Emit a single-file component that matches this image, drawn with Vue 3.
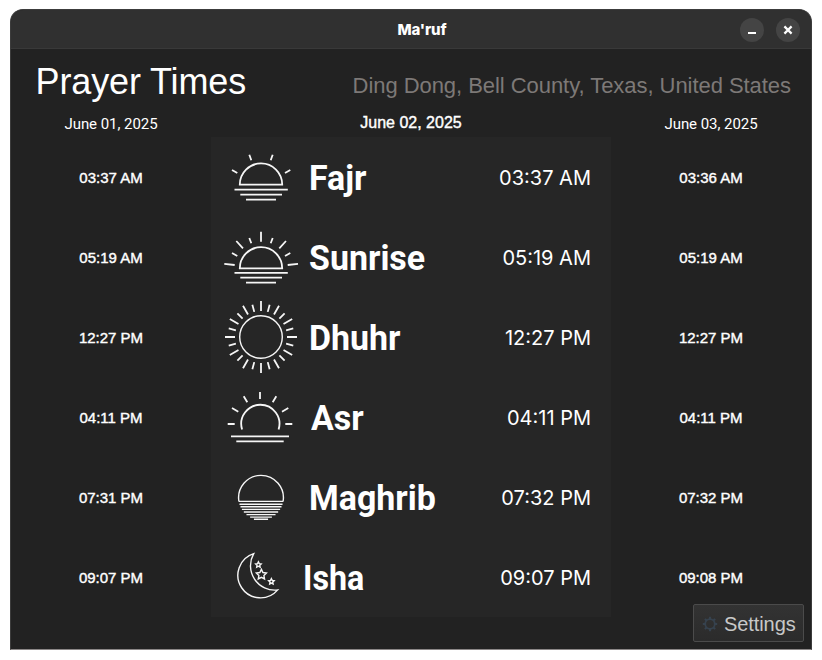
<script setup>
const polar = (cx, cy, r, deg) => {
  const a = (deg * Math.PI) / 180
  return [cx + r * Math.sin(a), cy - r * Math.cos(a)]
}

const noonRays = Array.from({ length: 24 }, (_, i) => {
  const long = i % 2 === 0
  const [x1, y1] = polar(40, 40, 26, i * 15)
  const [x2, y2] = polar(40, 40, long ? 36 : 33.4, i * 15)
  return `M${x1.toFixed(2)} ${y1.toFixed(2)}L${x2.toFixed(2)} ${y2.toFixed(2)}`
}).join('')

const star = (cx, cy, r) =>
  Array.from({ length: 10 }, (_, i) => {
    const [x, y] = polar(cx, cy, i % 2 ? r * 0.5 : r, i * 36)
    return `${x.toFixed(2)},${y.toFixed(2)}`
  }).join(' ')

const waterLines = [44.4, 47.2, 49.8, 52.4, 55, 57.6, 60.1, 62.2].map((y) => {
  const half = Math.sqrt(Math.max(22.6 ** 2 - (y - 40.3) ** 2, 50))
  return `M${(40 - half).toFixed(2)} ${y}H${(40 + half).toFixed(2)}`
}).join('')

const prayers = [
  { id: 'fajr', name: 'Fajr', prev: '03:37 AM', now: '03:37 AM', next: '03:36 AM' },
  { id: 'sunrise', name: 'Sunrise', prev: '05:19 AM', now: '05:19 AM', next: '05:19 AM' },
  { id: 'dhuhr', name: 'Dhuhr', prev: '12:27 PM', now: '12:27 PM', next: '12:27 PM' },
  { id: 'asr', name: 'Asr', prev: '04:11 PM', now: '04:11 PM', next: '04:11 PM' },
  { id: 'maghrib', name: 'Maghrib', prev: '07:31 PM', now: '07:32 PM', next: '07:32 PM' },
  { id: 'isha', name: 'Isha', prev: '09:07 PM', now: '09:07 PM', next: '09:08 PM' },
]
</script>

<template>
  <main class="window">
    <header class="titlebar">
      <span class="app-name">Ma'ruf</span>
      <div class="controls">
        <button class="control" aria-label="Minimize">
          <svg viewBox="0 0 24 24"><path d="M8 15h8" stroke="#fff" stroke-width="2" /></svg>
        </button>
        <button class="control" aria-label="Close">
          <svg viewBox="0 0 24 24"><path d="M8.4 8.4l7.2 7.2M15.6 8.4l-7.2 7.2" stroke="#fff" stroke-width="2.2" /></svg>
        </button>
      </div>
    </header>

    <div class="heading">
      <h1>Prayer Times</h1>
      <p class="location">Ding Dong, Bell County, Texas, United States</p>
    </div>

    <div class="columns dates">
      <span class="date">June 01, 2025</span>
      <span class="date today">June 02, 2025</span>
      <span class="date">June 03, 2025</span>
    </div>

    <div class="columns">
      <div class="side">
        <span v-for="p in prayers" :key="p.id" class="side-time">{{ p.prev }}</span>
      </div>
      <div class="current">
        <div v-for="p in prayers" :key="p.id" class="row">
          <svg class="icon" viewBox="0 0 80 80">
            <g v-if="p.id === 'fajr'">
              <path d="M18.8 47.6A21.2 21.2 0 0 1 61.2 47.6Z" />
              <path d="M13.5 52.7H66.8M19.3 57.7H61M25 62.6H55M28.3 17.7L30.3 23.3M51.7 17.7L49.7 23.3M11 33L16.3 36M69.3 33L64 36" />
            </g>
            <g v-else-if="p.id === 'sunrise'">
              <path d="M18.8 51.4A21.2 21.2 0 0 1 61.2 51.4Z" />
              <path d="M13.5 55.8H66.8M19.3 60.7H61M25 65.6H55M40 14.7V24.7M15.3 24L22 31.3M65 24L58.3 31.3M28.3 21L30.3 26.3M51.7 21L49.7 26.3M11 36L16.3 39M69.3 36L64 39M3.3 46.8L13.7 48M77 46.8L66.7 48" />
            </g>
            <g v-else-if="p.id === 'dhuhr'">
              <circle cx="40" cy="40" r="21.3" class="thin" />
              <path :d="noonRays" />
            </g>
            <g v-else-if="p.id === 'asr'">
              <path d="M21.1 52.5A19.1 19.1 0 1 1 57.6 52.5" />
              <path d="M10 59.4H68M15.3 64.4H62.7M39 15V22M22.7 19.3L26.3 25.3M55.3 19.3L51.7 25.3M11 31L17.3 34.7M67.3 31L61 34.7M6.7 47H13.7M64.3 47H71.3" />
            </g>
            <g v-else-if="p.id === 'maghrib'" class="thin">
              <path d="M17.9 44.4A22.4 22.4 0 1 1 62.1 44.4" />
              <path :d="waterLines" />
            </g>
            <g v-else class="thin">
              <path d="M32.7 16.7A22.6 22.6 0 1 0 56.7 52.9A24.3 24.3 0 0 1 32.7 16.7Z" />
              <polygon :points="star(37.4, 27.8, 2.9)" />
              <polygon :points="star(40.4, 37.7, 5.3)" />
              <polygon :points="star(50.4, 44.6, 2.9)" />
            </g>
          </svg>
          <span class="name" :class="p.id">{{ p.name }}</span>
          <span class="time">{{ p.now }}</span>
        </div>
      </div>
      <div class="side">
        <span v-for="p in prayers" :key="p.id" class="side-time">{{ p.next }}</span>
      </div>
    </div>

    <button class="settings">
      <svg viewBox="0 0 16 16">
        <circle cx="8" cy="8" r="4.8" fill="none" stroke="#36424e" stroke-width="1.8" />
        <path d="M8 .8V3M8 13v2.2M.8 8H3M13 8h2.2M2.9 2.9l1.6 1.6M11.5 11.5l1.6 1.6M13.1 2.9l-1.6 1.6M4.5 11.5l-1.6 1.6" stroke="#36424e" stroke-width="2" />
      </svg>
      <span>Settings</span>
    </button>
  </main>
</template>

<style>
body {
  margin: 0;
  background: #fff;
}
</style>

<style scoped>
.window {
  position: relative;
  box-sizing: border-box;
  width: 802px;
  height: 641px;
  margin: 9px 10px 0;
  border: 1px solid #3c3c3c;
  border-bottom-color: #8c8888;
  border-radius: 13px 13px 0 0;
  background: #222;
  color: #fff;
  overflow: hidden;
  font-family: "Liberation Sans", Arial, sans-serif;
}
.titlebar {
  display: grid;
  grid-template-columns: 1fr auto 1fr;
  align-items: center;
  box-sizing: border-box;
  height: 39px;
  padding: 0 11px;
  background: #303030;
  border-bottom: 1px solid #393939;
}
.app-name {
  grid-column: 2;
  margin-left: 22px;
  padding-top: 2px;
  font: 800 15px/20px Inter, sans-serif;
  letter-spacing: -0.1px;
}
.controls {
  display: flex;
  justify-content: flex-end;
  gap: 12px;
  padding-top: 2px;
}
.control {
  width: 24px;
  height: 24px;
  padding: 0;
  border: 0;
  border-radius: 50%;
  background: #444;
}
.control svg {
  display: block;
  width: 24px;
  height: 24px;
}
.heading {
  display: flex;
  justify-content: space-between;
  align-items: flex-start;
  height: 61px;
  padding: 0 20px 0 24.5px;
}
h1 {
  margin: 0;
  font-size: 36px;
  font-weight: 400;
  line-height: 66px;
  letter-spacing: -0.12px;
}
.location {
  margin: 0;
  font-size: 22px;
  line-height: 74px;
  letter-spacing: -0.05px;
  color: #7d7977;
}
.columns {
  display: grid;
  grid-template-columns: 200px 400px 200px;
}
.dates {
  height: 27px;
}
.date {
  text-align: center;
  font: 400 15px/28px Roboto, sans-serif;
  letter-spacing: -0.05px;
}
.today {
  font: 400 16px/25px "Liberation Sans", sans-serif;
  letter-spacing: 0;
  -webkit-text-stroke: 0.4px #fff;
}
.side {
  display: grid;
  grid-auto-rows: 80px;
  align-items: center;
  justify-items: center;
}
.side-time {
  font-size: 15px;
  -webkit-text-stroke: 0.4px #fff;
}
.current {
  background: #262626;
}
.row {
  display: flex;
  align-items: center;
  height: 80px;
  padding: 0 20px 0 10px;
}
.icon {
  width: 80px;
  height: 80px;
  flex: none;
  fill: none;
  stroke: #f6f6f6;
  stroke-width: 1.8;
}
.thin {
  stroke-width: 1.4;
}
.name {
  margin-left: 8px;
  padding-top: 4px;
  font: 700 35px/44px Roboto, sans-serif;
  transform: scaleX(0.97);
  transform-origin: left center;
}
.asr {
  margin-left: 10px;
}
.isha {
  margin-left: 2px;
  transform: scaleX(0.92);
}
.time {
  margin-left: auto;
  padding-top: 2px;
  font: 400 20px/25px Inter, sans-serif;
}
.settings {
  position: absolute;
  right: 7px;
  bottom: 7px;
  display: flex;
  align-items: center;
  gap: 6px;
  box-sizing: border-box;
  width: 111px;
  height: 38px;
  padding: 1px 0 0 8px;
  border: 1px solid #4b4b4b;
  border-radius: 2px;
  background: linear-gradient(#333, #2b2b2b);
  color: #c8c8c8;
  font: 20px/24px "Liberation Sans", sans-serif;
  letter-spacing: -0.08px;
}
.settings svg {
  width: 16px;
  height: 16px;
}
</style>
